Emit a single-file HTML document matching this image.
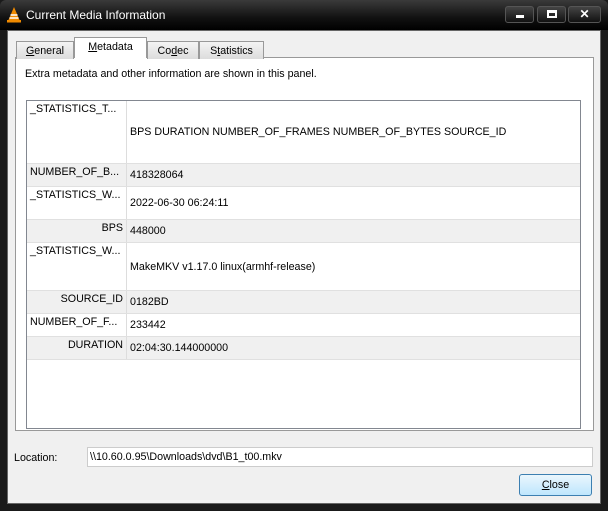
<!DOCTYPE html>
<html><head><style>
*{margin:0;padding:0;box-sizing:border-box}
body{width:608px;height:511px;background:#1a1a1a;font-family:"Liberation Sans",sans-serif;font-size:10.7px;color:#000;position:relative;overflow:hidden}
.abs{position:absolute}
.title{left:0;top:0;width:608px;height:30px;background:linear-gradient(#3a3a3a,#111 60%,#000);border-radius:6px 6px 0 0}
.tt{left:26px;top:8px;color:#fff;font-size:12px}
.btn{top:6px;height:17px;border:1px solid #555;border-radius:3px;background:linear-gradient(#444,#111)}
.client{left:7px;top:30px;width:594px;height:474px;background:#f0f0f0;border:1px solid #666}
.tab{top:40px;height:18px;border:1px solid #999;border-bottom:none;background:linear-gradient(#f4f4f4,#dcdcdc);text-align:center;padding-top:3px}
.panel{left:15px;top:57px;width:579px;height:374px;background:#fff;border:1px solid #999}
.tbl{left:26px;top:100px;width:555px;height:329px;border:1px solid #828790;background:#fff}
.row{position:absolute;left:0;width:553px;border-bottom:1px solid #e0e0e0}
.k{position:absolute;left:0;width:100px;height:100%;border-right:1px solid #ddd;padding:2px 3px;white-space:nowrap;overflow:hidden}
.v{position:absolute;left:103px;white-space:nowrap}
.g{background:#f0f0f0}
</style></head><body>
<div class="abs title"></div>
<svg class="abs" style="left:6px;top:6px" width="16" height="17"><path d="M8 1 L14 15 L2 15 Z" fill="#f08a00"/><path d="M4.5 9h7M3.5 12h9" stroke="#fff" stroke-width="1.5"/><rect x="1" y="14" width="14" height="2.5" fill="#f08a00"/></svg>
<div class="abs tt">Current Media Information</div>
<div class="abs btn" style="left:505px;width:29px"><div class="abs" style="left:10px;top:8px;width:8px;height:3px;background:#fff"></div></div>
<div class="abs btn" style="left:537px;width:29px"><div class="abs" style="left:9px;top:3px;width:10px;height:8px;border:2px solid #fff;border-top-width:3px"></div></div>
<div class="abs btn" style="left:568px;width:33px;color:#fff;font-weight:bold;text-align:center;font-size:12px;line-height:15px">✕</div>
<div class="abs client"></div>
<div class="abs panel"></div>
<div class="abs tab" style="left:16px;width:58px;top:41px"><u>G</u>eneral</div>
<div class="abs tab" style="left:74px;width:73px;top:37px;height:21px;background:#fff;border-color:#999"><u>M</u>etadata</div>
<div class="abs tab" style="left:147px;width:52px;top:41px">Co<u>d</u>ec</div>
<div class="abs tab" style="left:199px;width:65px;top:41px">S<u>t</u>atistics</div>
<div class="abs" style="left:25px;top:68px">Extra metadata and other information are shown in this panel.</div>
<div class="abs tbl">
<div class="row" style="top:0;height:63px"><div class="k">_STATISTICS_T...</div><div class="v" style="top:25px">BPS DURATION NUMBER_OF_FRAMES NUMBER_OF_BYTES SOURCE_ID</div></div>
<div class="row g" style="top:63px;height:23px"><div class="k">NUMBER_OF_B...</div><div class="v" style="top:5px">418328064</div></div>
<div class="row" style="top:86px;height:33px"><div class="k">_STATISTICS_W...</div><div class="v" style="top:10px">2022-06-30 06:24:11</div></div>
<div class="row g" style="top:119px;height:23px"><div class="k" style="text-align:right">BPS</div><div class="v" style="top:5px">448000</div></div>
<div class="row" style="top:142px;height:48px"><div class="k">_STATISTICS_W...</div><div class="v" style="top:18px">MakeMKV v1.17.0 linux(armhf-release)</div></div>
<div class="row g" style="top:190px;height:23px"><div class="k" style="text-align:right">SOURCE_ID</div><div class="v" style="top:5px">0182BD</div></div>
<div class="row" style="top:213px;height:23px"><div class="k">NUMBER_OF_F...</div><div class="v" style="top:5px">233442</div></div>
<div class="row g" style="top:236px;height:23px"><div class="k" style="text-align:right">DURATION</div><div class="v" style="top:5px">02:04:30.144000000</div></div>
</div>
<div class="abs" style="left:14px;top:452px">Location:</div>
<div class="abs" style="left:87px;top:447px;width:506px;height:20px;background:#fff;border:1px solid #ccc;padding:3px 2px">\\10.60.0.95\Downloads\dvd\B1_t00.mkv</div>
<div class="abs" style="left:519px;top:474px;width:73px;height:22px;border:1px solid #3c7fb1;border-radius:3px;background:linear-gradient(#eaf6fd,#bee6fd);text-align:center;padding-top:4px"><u>C</u>lose</div>
</body></html>
